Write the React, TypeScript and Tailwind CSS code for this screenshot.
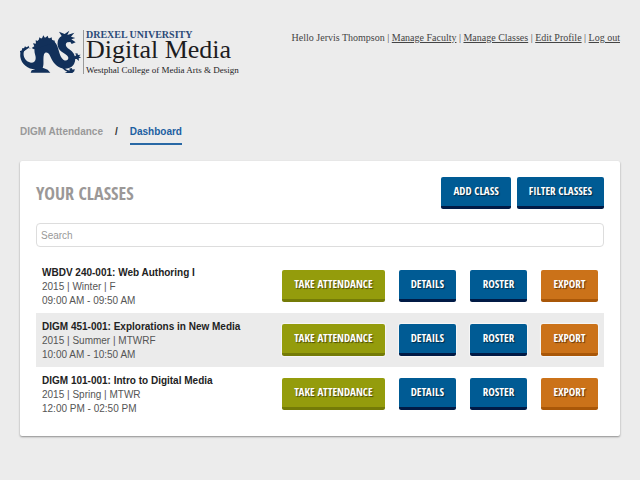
import React from "react";

type ClassRow = { name: string; term: string; time: string };

const classes: ClassRow[] = [
  { name: "WBDV 240-001: Web Authoring I", term: "2015 | Winter | F", time: "09:00 AM - 09:50 AM" },
  { name: "DIGM 451-001: Explorations in New Media", term: "2015 | Summer | MTWRF", time: "10:00 AM - 10:50 AM" },
  { name: "DIGM 101-001: Intro to Digital Media", term: "2015 | Spring | MTWR", time: "12:00 PM - 02:50 PM" },
];

const tones = {
  blue: "bg-[#005b94] border-[#011a45]",
  green: "bg-[#949c0c] border-[#747b07]",
  orange: "bg-[#cb7219] border-[#a95708]",
};

function Button({ tone, children }: { tone: keyof typeof tones; children: React.ReactNode }) {
  return (
    <button
      type="button"
      className={`h-8 min-w-[57px] shrink-0 rounded-xs border-b-3 px-3 font-['Open_Sans_Condensed','Liberation_Sans_Narrow','Liberation_Sans',sans-serif] text-[11px] font-bold whitespace-nowrap text-white uppercase shadow-[0_0_1px_1px_#fff8] text-shadow-[1px_1px_1px_#0008] ${tones[tone]}`}
    >
      {children}
    </button>
  );
}

function Dragon() {
  return (
    <svg viewBox="30 30 186 132" className="h-11 w-[62px] shrink-0" fill="#12305a" stroke="none" aria-hidden="true">
      {/* tail and coiled body */}
      <path d="M63 86C50 79 39 90 41 106C43 118 52 127 63 128C76 128 80 117 75 103C70 85 76 65 90 57C109 47 132 57 140 74C148 91 148 108 160 119C169 126 178 119 174 110C168 99 149 97 144 80C140 66 145 53 155 48L147 35L164 42L178 32L172 45L193 38L183 50L196 54L184 58L197 67L185 72L181 66L172 67C164 72 167 82 178 88C193 97 200 114 193 130C187 145 168 150 151 143C134 136 125 119 120 107C115 97 106 94 102 103C98 116 103 132 98 143L113 149L121 158H62L65 151L76 148C54 148 34 132 31 111C28 88 45 74 63 86Z" />
      {/* ridge along the back */}
      <path d="M33 100L28 92L36 94L36 84L42 88L45 78L49 83L56 77L57 83ZM72 88L65 84L73 79L69 70L78 71L77 61L86 64L88 52L95 57L100 46L105 54L113 47L116 56L125 52L126 61L135 62L132 69Z" />
      {/* claws */}
      <path d="M188 106C193 110 197 109 199 104L194 101L202 100L204 105L212 104L207 109L213 113L206 115L207 123L200 117C196 118 190 116 187 113Z" />
      <path d="M160 138C165 147 170 152 180 151L177 146L185 144L188 149L194 147L193 154L187 159H164L172 155C161 151 156 144 154 138Z" />
    </svg>
  );
}

function Logo() {
  return (
    <div className="flex items-start">
      <Dragon />
      <div className="ml-px flex h-11 flex-col border-l border-[#999] pl-[2px] font-['Liberation_Serif',serif] whitespace-nowrap text-[#1d1d1f]">
        <span className="text-[10px] leading-[10px] font-bold text-[#2b4a78]">DREXEL UNIVERSITY</span>
        <span className="text-[26px] leading-5">Digital Media</span>
        <span className="mt-1 text-[9px] leading-3">Westphal College of Media Arts &amp; Design</span>
      </div>
    </div>
  );
}

export default function App() {
  return (
    <div className="min-h-screen bg-[#ececec] px-5 pt-[30px] font-['Liberation_Sans',Arial,sans-serif] text-[10px] text-[#555]">
      <header className="flex items-start justify-between">
        <Logo />
        <nav className="font-['Liberation_Serif',serif] text-[10px] leading-4 text-[#444]">
          Hello Jervis Thompson | <a href="#faculty" className="underline">Manage Faculty</a> |{" "}
          <a href="#classes" className="underline">Manage Classes</a> |{" "}
          <a href="#profile" className="underline">Edit Profile</a> |{" "}
          <a href="#logout" className="underline">Log out</a>
        </nav>
      </header>

      <nav aria-label="Breadcrumb" className="mt-[50px] flex gap-3 leading-4 font-bold">
        <a href="#home" className="text-[#999]">DIGM Attendance</a>
        <span className="text-[#333]">/</span>
        <a href="#dashboard" className="border-b-2 border-[#2868a5] pb-[3px] text-[#1c5fa1]">Dashboard</a>
      </nav>

      <main className="mt-4 rounded-xs bg-white px-4 pt-4 pb-[15px] shadow-[0_1px_2px_#0006]">
        <div className="flex items-center gap-[6px]">
          <h1 className="mr-auto font-['Open_Sans_Condensed','Liberation_Sans_Narrow','Liberation_Sans',sans-serif] text-lg font-bold text-[#9b9897] uppercase">
            Your Classes
          </h1>
          <Button tone="blue">Add Class</Button>
          <Button tone="blue">Filter Classes</Button>
        </div>
        <input
          type="search"
          aria-label="Search"
          placeholder="Search"
          className="mt-[14px] mb-3 block h-6 w-full rounded-[4px] border border-[#ddd] px-1 placeholder:text-[#999]"
        />
        <table className="w-full">
          <tbody>
            {classes.map((row) => (
              <tr key={row.name} className="even:bg-[#ebebeb]">
                <td className="pt-[7px] pb-[5px] pl-[6px] leading-[14px]">
                  <div className="font-bold text-[#222]">{row.name}</div>
                  <div>{row.term}</div>
                  <div>{row.time}</div>
                </td>
                <td className="py-[6px] pr-[6px]">
                  <div className="flex justify-end gap-[14px]">
                    <Button tone="green">Take Attendance</Button>
                    <Button tone="blue">Details</Button>
                    <Button tone="blue">Roster</Button>
                    <Button tone="orange">Export</Button>
                  </div>
                </td>
              </tr>
            ))}
          </tbody>
        </table>
      </main>
    </div>
  );
}
